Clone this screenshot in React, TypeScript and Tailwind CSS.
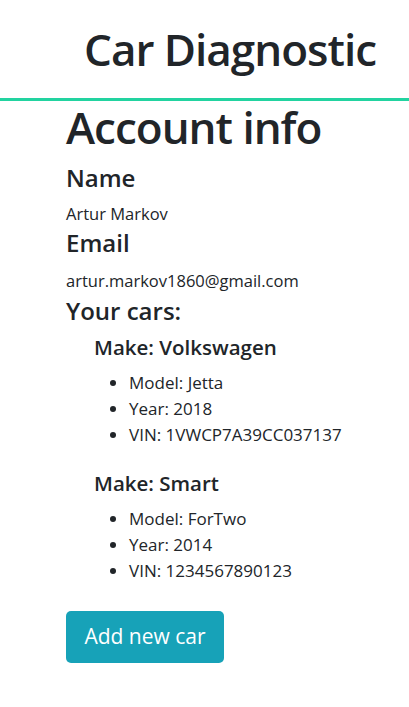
import React from "react";

const cars = [
  { make: "Volkswagen", model: "Jetta", year: 2018, vin: "1VWCP7A39CC037137" },
  { make: "Smart", model: "ForTwo", year: 2014, vin: "1234567890123" },
];

const App = () => {
  return (
    <div className="min-h-screen bg-white text-[#212529] font-['Open_Sans',sans-serif]">
      <header className="h-[101px] border-b-[3px] border-[#22d3a0] flex items-center pl-[84px]">
        <h1 className="text-[44px] font-semibold leading-none tracking-[-1px]">
          Car Diagnostic
        </h1>
      </header>
      <main className="pl-[66px] pr-4">
        <h1 className="text-[44px] font-semibold leading-[58px] -mt-[3px] mb-[7px] tracking-[-1px]">
          Account info
        </h1>
        <h4 className="text-[24px] font-semibold leading-[30px]">Name</h4>
        <p className="text-[16.5px] leading-[27px] mt-[7px]">Artur Markov</p>
        <h4 className="text-[24px] font-semibold leading-[32px]">Email</h4>
        <p className="text-[16.5px] leading-[26px] mt-[9px]">
          artur.markov1860@gmail.com
        </p>
        <h4 className="text-[24px] font-semibold leading-[34px]">
          Your cars:
        </h4>
        <div className="pl-[28px]">
          {cars.map((car) => (
            <div key={car.vin} className="mt-[4px] mb-[20px]">
              <h5 className="text-[20.5px] font-semibold leading-[30px]">
                Make: {car.make}
              </h5>
              <ul className="list-disc pl-[35px] mt-[8px] text-[17px] leading-[26px]">
                <li>Model: {car.model}</li>
                <li>Year: {car.year}</li>
                <li>VIN: {car.vin}</li>
              </ul>
            </div>
          ))}
        </div>
        <button className="mt-[7px] h-[52px] w-[158px] rounded-[5px] bg-[#17a2b8] text-white text-[21px]">
          Add new car
        </button>
      </main>
    </div>
  );
};

export default App;
